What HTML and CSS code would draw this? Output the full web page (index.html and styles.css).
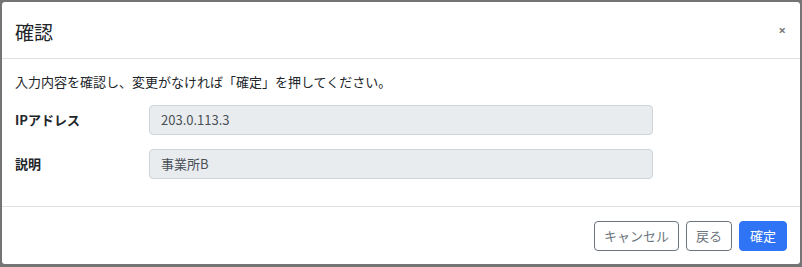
FILE: index.html
```html
<!DOCTYPE html>
<html lang="ja">
<head>
<meta charset="utf-8">
<title>確認</title>
<link rel="stylesheet" href="styles.css">
</head>
<body>
<div class="modal">
  <div class="modal-header">
    <h5 class="modal-title">確認</h5>
    <button class="close" type="button" aria-label="Close">×</button>
  </div>
  <div class="modal-body">
    <p class="lead-text">入力内容を確認し、変更がなければ「確定」を押してください。</p>
    <div class="form-grid">
      <label class="form-label">IPアドレス</label>
      <div class="form-value">203.0.113.3</div>
      <label class="form-label">説明</label>
      <div class="form-value">事業所B</div>
    </div>
  </div>
  <div class="modal-footer">
    <button class="btn btn-outline" type="button">キャンセル</button>
    <button class="btn btn-outline" type="button">戻る</button>
    <button class="btn btn-primary" type="button">確定</button>
  </div>
</div>
</body>
</html>
```
FILE: styles.css
```css
html, body {
  margin: 0;
  padding: 0;
}
body {
  background: #747474;
  font-family: "Noto Sans CJK JP", "Noto Sans", sans-serif;
  color: #212529;
  font-size: 13px;
  width: 802px;
  height: 267px;
  overflow: hidden;
}
.modal {
  margin: 2px 0 0 2px;
  width: 798px;
  height: 262px;
  background: #fff;
  border-radius: 3px;
  display: flex;
  flex-direction: column;
}
.modal-header {
  height: 56px;
  padding: 0 14px 0 13px;
  display: flex;
  align-items: center;
  justify-content: space-between;
  border-bottom: 1px solid #dee2e6;
}
.modal-title {
  margin: 0;
  font-size: 19px;
  font-weight: 400;
  line-height: 24px;
  color: #212529;
  position: relative;
  top: 2px;
}
.close {
  background: none;
  border: 0;
  padding: 0;
  font-family: "Noto Sans", sans-serif;
  font-size: 13px;
  font-weight: 700;
  color: #7a7a7a;
  line-height: 14px;
  cursor: pointer;
}
.modal-body {
  flex: 1;
  padding: 13px 12px 0 13px;
}
.lead-text {
  margin: 0 0 13px;
  line-height: 20px;
}
.form-grid {
  display: grid;
  grid-template-columns: 134px 504px;
  row-gap: 14px;
  align-items: center;
}
.form-label {
  font-weight: 700;
  line-height: 20px;
}
.form-value {
  height: 28px;
  line-height: 28px;
  padding: 0 11px;
  background: #e9ecef;
  border: 1px solid #ced4da;
  border-radius: 4px;
  color: #495057;
}
.modal-footer {
  height: 57px;
  border-top: 1px solid #dee2e6;
  padding: 0 13px 0 0;
  display: flex;
  align-items: center;
  justify-content: flex-end;
  gap: 7px;
}
.btn {
  font-family: "Noto Sans CJK JP", "Noto Sans", sans-serif;
  font-size: 13px;
  line-height: 20px;
  height: 30px;
  padding: 0 9px;
  border-radius: 4px;
  border: 1px solid #6c757d;
  background: #fff;
  color: #6c757d;
  cursor: pointer;
}
.btn-primary {
  padding: 0 10px;
  background: #2f74f5;
  border-color: #2f74f5;
  color: #fff;
}
```
